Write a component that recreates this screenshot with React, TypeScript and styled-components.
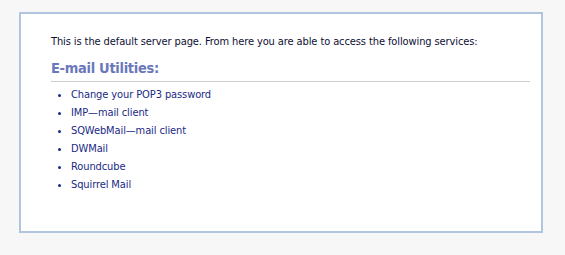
import styled, { createGlobalStyle } from 'styled-components';

const GlobalStyle = createGlobalStyle`
  html, body {
    margin: 0;
    padding: 0;
    background: #f7f7f7;
  }
  body {
    font-family: 'DejaVu Sans', Tahoma, Verdana, sans-serif;
    font-size: 11px;
    font-stretch: condensed;
  }
`;

const Page = styled.div`
  padding: 12px 0 0 19px;
`;

const Panel = styled.div`
  box-sizing: border-box;
  width: 524px;
  height: 221px;
  background: #ffffff;
  border: 2px solid #b2c5de;
  padding: 19px 11px 0 30px;
`;

const Intro = styled.p`
  margin: 0;
  line-height: 18px;
  color: #0d0f33;
  letter-spacing: -0.1px;
`;

const Heading = styled.h2`
  margin: 7px 0 0 0;
  padding-bottom: 3px;
  font-size: 14.5px;
  line-height: 20px;
  font-weight: bold;
  letter-spacing: -0.3px;
  color: #6a78bb;
  border-bottom: 1px solid #cccccc;
`;

const List = styled.ul`
  margin: 4px 0 0 0;
  padding-left: 20px;
  list-style: disc;
  color: #1a2a86;
`;

const Item = styled.li`
  line-height: 18px;
  letter-spacing: -0.1px;
`;

const services = [
  'Change your POP3 password',
  'IMP\u2014mail client',
  'SQWebMail\u2014mail client',
  'DWMail',
  'Roundcube',
  'Squirrel Mail',
];

export default function App() {
  return (
    <>
      <GlobalStyle />
      <Page>
        <Panel>
          <Intro>
            This is the default server page. From here you are able to access the following services:
          </Intro>
          <Heading>E-mail Utilities:</Heading>
          <List>
            {services.map((s) => (
              <Item key={s}>{s}</Item>
            ))}
          </List>
        </Panel>
      </Page>
    </>
  );
}
